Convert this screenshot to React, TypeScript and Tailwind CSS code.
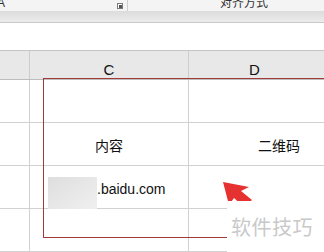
import React from "react";

const font = { fontFamily: '"Liberation Sans", "Noto Sans CJK SC", Arial, sans-serif' };

function Row({ a, c, d }: { a?: React.ReactNode; c?: React.ReactNode; d?: React.ReactNode }) {
  return (
    <div className="grid grid-cols-[30px_159px_1fr] h-[43px] border-b border-[#d2d2d2]">
      <div className="border-r border-[#d2d2d2]">{a}</div>
      <div className="border-r border-[#d2d2d2] relative">{c}</div>
      <div className="relative">{d}</div>
    </div>
  );
}

export default function App() {
  return (
    <div className="relative w-[324px] h-[252px] overflow-hidden bg-white text-[#111]" style={font}>
      {/* ribbon */}
      <div className="h-[11px] bg-[#f4f4f4] overflow-hidden flex items-start text-[12px] leading-[14px] text-[#333]">
        <div className="w-[128px] h-full border-r border-[#cfcfcf] relative">
          <span className="absolute left-[-3px] top-[-4px]">A</span>
          <div className="absolute left-[117px] top-[3px] w-[6px] h-[6px] border border-[#7a7a7a] bg-white">
            <div className="absolute right-0 bottom-0 w-[3px] h-[3px] bg-[#555]" />
          </div>
        </div>
        <div className="flex-1 flex justify-start pl-[92px]">
          <span className="-mt-[4px]">对齐方式</span>
        </div>
      </div>
      {/* strip */}
      <div className="h-[12px] bg-gradient-to-b from-[#dcdcdc] to-[#ececec] border-b border-[#cacaca]" />
      {/* formula area */}
      <div className="h-[28px] bg-white border-b border-[#c4c4c4]" />
      {/* column header */}
      <div className="grid grid-cols-[30px_159px_1fr] h-[29px] bg-[#e8e8e8] border-b border-[#bdbdbd] text-[15px]">
        <div className="border-r border-[#cdcdcd]" />
        <div className="border-r border-[#cdcdcd] flex items-end justify-center pb-[1px] leading-[16px]">C</div>
        <div className="flex items-end justify-center pb-[1px] leading-[16px] pr-[4px]">D</div>
      </div>
      <Row />
      <Row
        c={<div className="h-full flex items-end justify-center pb-[11px] text-[14px] leading-[16px]">内容</div>}
        d={<div className="h-full flex items-end pl-[69px] pb-[11px] text-[14px] leading-[16px]">二维码</div>}
      />
      <Row
        c={
          <div className="h-full flex items-start pt-[11px] pl-[18px] text-[14px] leading-[16px]">
            <div className="w-[49px] h-[32px] bg-gradient-to-br from-[#dedede] to-[#f0f0f0]" />
            <span className="mt-[4px]">.baidu.com</span>
          </div>
        }
      />
      <Row />

      {/* red box */}
      <div className="absolute left-[43px] top-[78px] w-[320px] h-[160px] border border-[#a33a3a]" />

      {/* arrow */}
      <svg className="absolute left-[220px] top-[176px]" width="36" height="34" viewBox="0 0 36 34">
        <polygon points="3,6 9,29 14,22 24,31 32,24 21,15 29,11" fill="#e5312f" />
      </svg>

      {/* watermark */}
      <div className="absolute left-[227px] top-[201px] w-[97px] h-[51px] bg-white flex items-start pt-[14px] pl-[4px]">
        <span className="text-[20px] leading-[24px] text-[#c9c9c9] tracking-[0.5px]" style={{ fontFamily: '"Noto Sans CJK SC", sans-serif' }}>
          软件技巧
        </span>
      </div>
    </div>
  );
}
